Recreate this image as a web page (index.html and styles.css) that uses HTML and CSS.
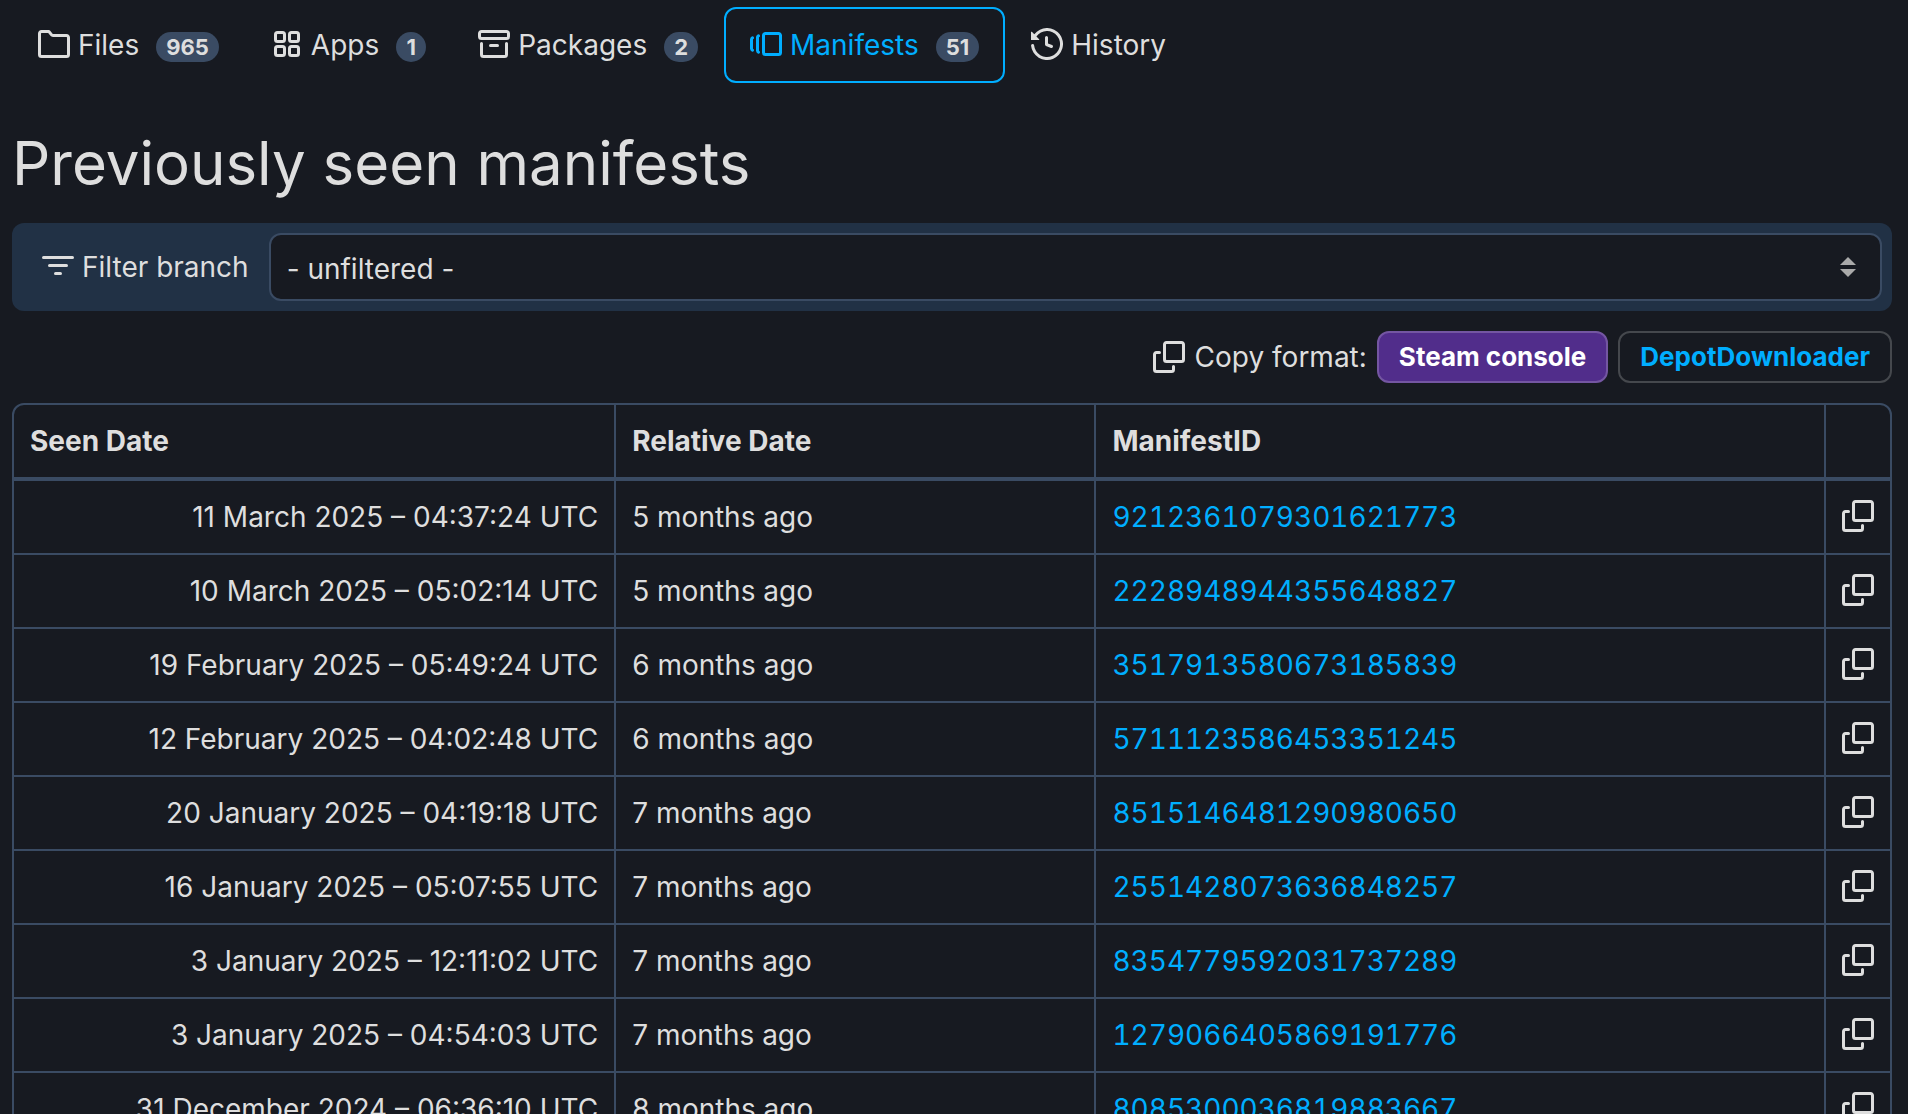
FILE: index.html
```html
<!DOCTYPE html>
<html lang="en">
<head>
<meta charset="utf-8">
<meta name="viewport" content="width=device-width, initial-scale=1">
<title>Previously seen manifests</title>
<link rel="stylesheet" href="styles.css">
</head>
<body>
<svg class="sprite" aria-hidden="true">
  <symbol id="icon-files" viewBox="0 0 16 16"><path d="M0 2.75C0 1.784.784 1 1.75 1H5c.55 0 1.07.26 1.4.7l.9 1.2a.25.25 0 0 0 .2.1h6.75c.966 0 1.75.784 1.75 1.75v8.5A1.75 1.75 0 0 1 14.25 15H1.75A1.75 1.75 0 0 1 0 13.25Zm1.75-.25a.25.25 0 0 0-.25.25v10.5c0 .138.112.25.25.25h12.5a.25.25 0 0 0 .25-.25v-8.5a.25.25 0 0 0-.25-.25H7.5c-.55 0-1.07-.26-1.4-.7l-.9-1.2a.25.25 0 0 0-.2-.1Z"/></symbol>
  <symbol id="icon-apps" viewBox="0 0 16 16"><g fill="none" stroke="currentColor" stroke-width="1.5"><rect x="2.25" y="2.25" width="4.5" height="4.5" rx="1"/><rect x="9.25" y="2.25" width="4.5" height="4.5" rx="1"/><rect x="2.25" y="9.25" width="4.5" height="4.5" rx="1"/><rect x="9.25" y="9.25" width="4.5" height="4.5" rx="1"/></g></symbol>
  <symbol id="icon-packages" viewBox="0 0 16 16"><path d="M0 2.75C0 1.784.784 1 1.75 1h12.5c.966 0 1.75.784 1.75 1.75v1.5A1.75 1.75 0 0 1 14.25 6H1.75A1.75 1.75 0 0 1 0 4.25ZM1.75 7a.75.75 0 0 1 .75.75v5.5c0 .138.112.25.25.25h10.5a.25.25 0 0 0 .25-.25v-5.5a.75.75 0 0 1 1.5 0v5.5A1.75 1.75 0 0 1 13.25 15H2.75A1.75 1.75 0 0 1 1 13.25v-5.5A.75.75 0 0 1 1.75 7Zm0-4.5a.25.25 0 0 0-.25.25v1.5c0 .138.112.25.25.25h12.5a.25.25 0 0 0 .25-.25v-1.5a.25.25 0 0 0-.25-.25ZM6.25 8h3.5a.75.75 0 0 1 0 1.5h-3.5a.75.75 0 0 1 0-1.5Z"/></symbol>
  <symbol id="icon-manifests" viewBox="0 0 16 16"><path d="M7.75 14A1.75 1.75 0 0 1 6 12.25v-8.5C6 2.784 6.784 2 7.75 2h6.5c.966 0 1.75.784 1.75 1.75v8.5A1.75 1.75 0 0 1 14.25 14Zm-.25-1.75c0 .138.112.25.25.25h6.5a.25.25 0 0 0 .25-.25v-8.5a.25.25 0 0 0-.25-.25h-6.5a.25.25 0 0 0-.25.25ZM4.9 3.508a.75.75 0 0 1-.274 1.025.249.249 0 0 0-.126.217v6.5c0 .09.048.173.126.217a.75.75 0 0 1-.752 1.298A1.75 1.75 0 0 1 3 11.25v-6.5c0-.649.353-1.214.874-1.516a.75.75 0 0 1 1.025.274ZM1.625 5.533h.001a.249.249 0 0 0-.126.217v4.5c0 .09.048.173.126.217a.75.75 0 0 1-.752 1.298A1.748 1.748 0 0 1 0 10.25v-4.5a1.748 1.748 0 0 1 .873-1.516.75.75 0 1 1 .752 1.299Z"/></symbol>
  <symbol id="icon-history" viewBox="0 0 16 16"><path d="m.427 1.927 1.215 1.215a8.002 8.002 0 1 1-1.6 5.685.75.75 0 1 1 1.493-.154 6.5 6.5 0 1 0 1.18-4.458l1.358 1.358A.25.25 0 0 1 3.896 6H.25A.25.25 0 0 1 0 5.75V2.104a.25.25 0 0 1 .427-.177ZM7.75 4a.75.75 0 0 1 .75.75v2.992l2.028.812a.75.75 0 0 1-.557 1.392l-2.5-1A.751.751 0 0 1 7 8.25v-3.5A.75.75 0 0 1 7.75 4Z"/></symbol>
  <symbol id="icon-filter" viewBox="0 0 16 16"><path d="M.75 3h14.5a.75.75 0 0 1 0 1.5H.75a.75.75 0 0 1 0-1.5ZM3 7.75A.75.75 0 0 1 3.75 7h8.5a.75.75 0 0 1 0 1.5h-8.5A.75.75 0 0 1 3 7.75Zm3 4a.75.75 0 0 1 .75-.75h2.5a.75.75 0 0 1 0 1.5h-2.5a.75.75 0 0 1-.75-.75Z"/></symbol>
  <symbol id="icon-copy" viewBox="0 0 16 16"><path d="M0 6.75C0 5.784.784 5 1.75 5h1.5a.75.75 0 0 1 0 1.5h-1.5a.25.25 0 0 0-.25.25v7.5c0 .138.112.25.25.25h7.5a.25.25 0 0 0 .25-.25v-1.5a.75.75 0 0 1 1.5 0v1.5A1.75 1.75 0 0 1 9.25 16h-7.5A1.75 1.75 0 0 1 0 14.25Z"/><path d="M5 1.75C5 .784 5.784 0 6.75 0h7.5C15.216 0 16 .784 16 1.75v7.5A1.75 1.75 0 0 1 14.25 11h-7.5A1.75 1.75 0 0 1 5 9.25Zm1.75-.25a.25.25 0 0 0-.25.25v7.5c0 .138.112.25.25.25h7.5a.25.25 0 0 0 .25-.25v-7.5a.25.25 0 0 0-.25-.25Z"/></symbol>
</svg>

<nav class="tabs" aria-label="Depot sections">
  <a class="tab" href="#files"><svg class="icon"><use href="#icon-files"/></svg>Files<span class="badge">965</span></a>
  <a class="tab" href="#apps"><svg class="icon"><use href="#icon-apps"/></svg>Apps<span class="badge">1</span></a>
  <a class="tab" href="#packages"><svg class="icon"><use href="#icon-packages"/></svg>Packages<span class="badge">2</span></a>
  <a class="tab tab-active" href="#manifests" aria-current="page"><svg class="icon"><use href="#icon-manifests"/></svg>Manifests<span class="badge">51</span></a>
  <a class="tab" href="#history"><svg class="icon"><use href="#icon-history"/></svg>History</a>
</nav>

<main>
  <h1 class="title">Previously seen manifests</h1>

  <div class="filter">
    <label class="filter-label" for="branch"><svg class="icon"><use href="#icon-filter"/></svg>Filter branch</label>
    <div class="select-wrap">
      <select class="select" id="branch"><option>- unfiltered -</option></select>
      <svg class="select-arrows" viewBox="0 0 16 20" aria-hidden="true"><path d="M8 0l8 8H0zM8 20l8-8H0z"/></svg>
    </div>
  </div>

  <div class="formats">
    <span class="formats-label"><svg class="icon"><use href="#icon-copy"/></svg>Copy format:</span>
    <button class="btn btn-primary" type="button">Steam console</button>
    <button class="btn" type="button">DepotDownloader</button>
  </div>

  <table class="manifests">
    <colgroup><col class="col-date"><col class="col-relative"><col><col class="col-copy"></colgroup>
    <thead>
      <tr><th>Seen Date</th><th>Relative Date</th><th>ManifestID</th><th></th></tr>
    </thead>
    <tbody>
      <tr><td class="date">11 March 2025 – 04:37:24 UTC</td><td>5 months ago</td><td><a class="id" href="#m1">9212361079301621773</a></td><td class="copy"><button class="copy-btn" type="button" aria-label="Copy"><svg class="icon"><use href="#icon-copy"/></svg></button></td></tr>
      <tr><td class="date">10 March 2025 – 05:02:14 UTC</td><td>5 months ago</td><td><a class="id" href="#m2">2228948944355648827</a></td><td class="copy"><button class="copy-btn" type="button" aria-label="Copy"><svg class="icon"><use href="#icon-copy"/></svg></button></td></tr>
      <tr><td class="date">19 February 2025 – 05:49:24 UTC</td><td>6 months ago</td><td><a class="id" href="#m3">3517913580673185839</a></td><td class="copy"><button class="copy-btn" type="button" aria-label="Copy"><svg class="icon"><use href="#icon-copy"/></svg></button></td></tr>
      <tr><td class="date">12 February 2025 – 04:02:48 UTC</td><td>6 months ago</td><td><a class="id" href="#m4">5711123586453351245</a></td><td class="copy"><button class="copy-btn" type="button" aria-label="Copy"><svg class="icon"><use href="#icon-copy"/></svg></button></td></tr>
      <tr><td class="date">20 January 2025 – 04:19:18 UTC</td><td>7 months ago</td><td><a class="id" href="#m5">8515146481290980650</a></td><td class="copy"><button class="copy-btn" type="button" aria-label="Copy"><svg class="icon"><use href="#icon-copy"/></svg></button></td></tr>
      <tr><td class="date">16 January 2025 – 05:07:55 UTC</td><td>7 months ago</td><td><a class="id" href="#m6">2551428073636848257</a></td><td class="copy"><button class="copy-btn" type="button" aria-label="Copy"><svg class="icon"><use href="#icon-copy"/></svg></button></td></tr>
      <tr><td class="date">3 January 2025 – 12:11:02 UTC</td><td>7 months ago</td><td><a class="id" href="#m7">8354779592031737289</a></td><td class="copy"><button class="copy-btn" type="button" aria-label="Copy"><svg class="icon"><use href="#icon-copy"/></svg></button></td></tr>
      <tr><td class="date">3 January 2025 – 04:54:03 UTC</td><td>7 months ago</td><td><a class="id" href="#m8">1279066405869191776</a></td><td class="copy"><button class="copy-btn" type="button" aria-label="Copy"><svg class="icon"><use href="#icon-copy"/></svg></button></td></tr>
      <tr><td class="date">31 December 2024 – 06:36:10 UTC</td><td>8 months ago</td><td><a class="id" href="#m9">8085300036819883667</a></td><td class="copy"><button class="copy-btn" type="button" aria-label="Copy"><svg class="icon"><use href="#icon-copy"/></svg></button></td></tr>
    </tbody>
  </table>
</main>
</body>
</html>
```
FILE: styles.css
```css
:root {
  --bg: #171a21;
  --text: #dedede;
  --link: #00aeff;
  --line: #3a4b63;
  --panel: #213145;
}

* {
  box-sizing: border-box;
}

html {
  background: var(--bg);
  scrollbar-width: none;
}

body {
  margin: 0;
  padding: 7px 16px 0 12px;
  background: var(--bg);
  color: var(--text);
  font: 28px/40px Inter, sans-serif;
}

a {
  color: var(--link);
  text-decoration: none;
}

button,
select {
  font: inherit;
}

.sprite {
  display: none;
}

.icon {
  flex: none;
  display: block;
  width: 32px;
  height: 32px;
  margin-bottom: 2px;
  fill: currentColor;
}

.tabs {
  display: flex;
}

.tab {
  display: flex;
  align-items: center;
  gap: 8px;
  height: 76px;
  padding: 0 24px;
  border: 2px solid transparent;
  border-radius: 12px;
  color: var(--text);
}

.tab-active {
  border-color: var(--link);
  color: var(--link);
}

.badge {
  min-width: 30px;
  margin: 4px 0 0 9px;
  padding: 0 10px;
  border-radius: 15px;
  background: var(--line);
  color: var(--text);
  font-size: 22px;
  font-weight: 700;
  line-height: 30px;
  text-align: center;
}

.title {
  margin: 44px 0 24px;
  font-size: 60px;
  font-weight: 400;
  line-height: 72px;
}

.filter {
  display: flex;
  align-items: center;
  gap: 20px;
  padding: 10px 10px 10px 30px;
  border-radius: 12px;
  background: var(--panel);
}

.filter-label,
.formats-label {
  display: flex;
  align-items: center;
  gap: 8px;
  white-space: nowrap;
}

.formats-label {
  gap: 10px;
}

.formats-label .icon {
  margin-bottom: 0;
}

.select-wrap {
  position: relative;
  flex: 1;
}

.select {
  display: block;
  width: 100%;
  height: 68px;
  padding: 4px 48px 0 16px;
  border: 2px solid var(--line);
  border-radius: 12px;
  background: var(--bg);
  color: var(--text);
  appearance: none;
}

.select-arrows {
  position: absolute;
  top: 24px;
  right: 26px;
  width: 16px;
  height: 20px;
  fill: #aaa;
  pointer-events: none;
}

.formats {
  display: flex;
  justify-content: flex-end;
  align-items: center;
  gap: 10px;
  margin: 20px 0;
}

.btn {
  height: 52px;
  padding: 0 20px;
  border: 2px solid #45484d;
  border-radius: 12px;
  background: transparent;
  color: var(--link);
  font-size: 26px;
  font-weight: 700;
  line-height: 48px;
}

.btn-primary {
  border-color: #7456a2;
  background: #512d8b;
  color: #fff;
}

.manifests {
  width: 100%;
  border: 2px solid var(--line);
  border-radius: 12px;
  border-spacing: 0;
  table-layout: fixed;
}

.col-date {
  width: 32.1%;
}

.col-relative {
  width: 25.6%;
}

.col-copy {
  width: 64px;
}

th,
td {
  padding: 16px;
  border-right: 2px solid var(--line);
  border-bottom: 2px solid var(--line);
  text-align: left;
  white-space: nowrap;
}

th {
  border-bottom-width: 4px;
}

th:last-child,
td:last-child {
  border-right: 0;
}

.date {
  text-align: right;
}

.id {
  font-variant-numeric: tabular-nums;
}

.copy-btn {
  display: block;
  padding: 0;
  border: 0;
  background: none;
  color: var(--text);
}
```
